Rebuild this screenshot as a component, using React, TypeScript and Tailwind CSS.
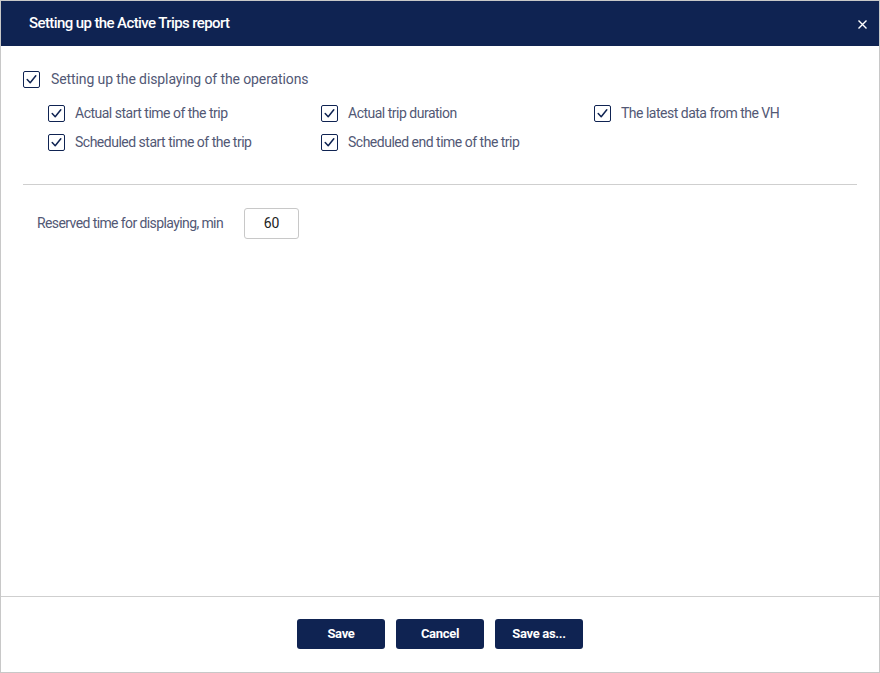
import React from 'react';

const Check: React.FC<{ label: string; main?: boolean }> = ({ label, main }) => (
  <label className="flex items-center gap-[10px] cursor-pointer">
    <span className="w-[17px] h-[17px] rounded-[2px] border-[1.5px] border-[#0f2352] flex items-center justify-center shrink-0">
      <svg width="13" height="13" viewBox="0 0 13 13" fill="none">
        <path d="M2.2 6.6 L5.2 9.8 L10.8 2.8" stroke="#0f2352" strokeWidth="1.5" strokeLinecap="round" strokeLinejoin="round" />
      </svg>
    </span>
    <span
      className={
        main
          ? 'text-[14px] text-[#525875] tracking-[-0.1px] whitespace-nowrap ml-[1px]'
          : 'text-[14px] text-[#525875] tracking-[-0.5px] whitespace-nowrap'
      }
    >
      {label}
    </span>
  </label>
);

const Btn: React.FC<{ children: React.ReactNode }> = ({ children }) => (
  <button className="w-[88px] h-[30px] rounded-[3px] bg-[#0f2352] text-white text-[13px] font-bold tracking-[-0.3px]">
    {children}
  </button>
);

const options = [
  'Actual start time of the trip',
  'Actual trip duration',
  'The latest data from the VH',
  'Scheduled start time of the trip',
  'Scheduled end time of the trip',
];

export default function App() {
  return (
    <div className="w-[880px] h-[673px] bg-white font-['Roboto',sans-serif]">
      <div className="h-full border border-[#c8c8c8] flex flex-col">
        <div className="h-[45px] bg-[#0f2352] flex items-center justify-between pl-[28px] pr-[11px] shrink-0">
          <h1 className="text-white text-[15px] font-medium tracking-[-0.6px]">Setting up the Active Trips report</h1>
          <svg width="11" height="11" viewBox="0 0 11 11" className="mt-[1px]">
            <path d="M1.5 1.5 L9.5 9.5 M9.5 1.5 L1.5 9.5" stroke="white" strokeWidth="1.4" />
          </svg>
        </div>

        <div className="flex-1 px-[22px] pt-[23px]">
          <Check main label="Setting up the displaying of the operations" />
          <div className="grid grid-cols-[273px_273px_1fr] gap-y-[8px] pl-[25px] mt-[13px]">
            {options.map(o => (
              <Check key={o} label={o} />
            ))}
          </div>
          <div className="h-px bg-[#cfcfcf] mt-[31px]" />
          <div className="flex items-center mt-[23px] pl-[14px]">
            <span className="text-[14px] text-[#525875] tracking-[-0.6px] w-[207px]">Reserved time for displaying, min</span>
            <div className="w-[55px] h-[31px] rounded-[3px] border border-[#c8c8c8] flex items-center justify-center text-[14px] text-[#222]">
              60
            </div>
          </div>
        </div>

        <div className="h-[76px] border-t border-[#cfcfcf] flex items-center justify-center gap-[11px] shrink-0 pb-[1px]">
          <Btn>Save</Btn>
          <Btn>Cancel</Btn>
          <Btn>Save as...</Btn>
        </div>
      </div>
    </div>
  );
}
